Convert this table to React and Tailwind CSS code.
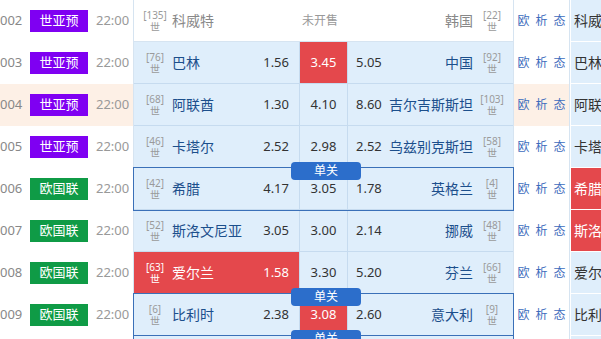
import React from "react";

const rows = [
  { num: "002", league: "wc", home: "科威特", hr: "135", ho: "", draw: "未开售", away: "韩国", ar: "22", ao: "", plain: true, right: "科威特" },
  { num: "003", league: "wc", home: "巴林", hr: "76", ho: "1.56", draw: "3.45", away: "中国", ar: "92", ao: "5.05", red: "draw", right: "巴林" },
  { num: "004", league: "wc", home: "阿联酋", hr: "68", ho: "1.30", draw: "4.10", away: "吉尔吉斯斯坦", ar: "103", ao: "8.60", peach: true, right: "阿联酋" },
  { num: "005", league: "wc", home: "卡塔尔", hr: "46", ho: "2.52", draw: "2.98", away: "乌兹别克斯坦", ar: "58", ao: "2.52", right: "卡塔尔" },
  { num: "006", league: "eu", home: "希腊", hr: "42", ho: "4.17", draw: "3.05", away: "英格兰", ar: "4", ao: "1.78", boxed: true, right: "希腊", rightRed: true },
  { num: "007", league: "eu", home: "斯洛文尼亚", hr: "52", ho: "3.05", draw: "3.00", away: "挪威", ar: "48", ao: "2.14", right: "斯洛文尼亚", rightRed: true },
  { num: "008", league: "eu", home: "爱尔兰", hr: "63", ho: "1.58", draw: "3.30", away: "芬兰", ar: "66", ao: "5.20", red: "home", right: "爱尔兰" },
  { num: "009", league: "eu", home: "比利时", hr: "6", ho: "2.38", draw: "3.08", away: "意大利", ar: "9", ao: "2.60", red: "draw", boxed: true, right: "比利时" },
  { num: "010", league: "eu", home: "葡萄牙", hr: "5", ho: "1.45", draw: "4.20", away: "波兰", ar: "26", ao: "5.60", boxed: true, right: "葡萄牙" },
];

function Rank({ n, white }) {
  return (
    <div
      className={`w-[22px] flex flex-col items-center text-[10px] leading-[12px] ${
        white ? "text-white" : "text-[#9a9a9a]"
      }`}
    >
      <span className="leading-[12px]">[{n}]</span>
      <span className="leading-[12px]">世</span>
    </div>
  );
}

function Row({ r }) {
  const homeRed = r.red === "home";
  const drawRed = r.red === "draw";
  const cellBg = r.plain ? "bg-white" : "bg-[#dfeefb]";
  const line = r.plain ? "border-white" : "border-[#c6dbef]";
  return (
    <div className="flex h-[42px]">
      <div
        className={`w-[134px] shrink-0 flex items-center border-r border-[#d6e4f1] ${
          r.peach ? "bg-[#fdf0e6]" : "bg-white"
        }`}
      >
        <span className="w-[30px] text-[13px] text-[#888]">{r.num}</span>
        <span
          className={`w-[58px] h-[22px] flex items-center justify-center text-[13px] text-white ${
            r.league === "wc" ? "bg-[#7f00f2]" : "bg-[#0f9b46]"
          }`}
        >
          {r.league === "wc" ? "世亚预" : "欧国联"}
        </span>
        <span className="ml-[8px] text-[13px] text-[#999]">22:00</span>
      </div>

      <div
        className={`w-[379px] shrink-0 flex ${
          r.boxed ? "relative z-[5] outline outline-1 outline-[#3a70b8]" : ""
        } ${r.plain ? "border-b border-[#d6e4f1]" : ""}`}
      >
        <div
          className={`w-[166px] shrink-0 flex items-center pl-[10px] pr-[10px] border-r ${
            r.plain ? "" : "border-b"
          } ${line} ${homeRed ? "bg-[#e4484c]" : cellBg}`}
        >
          <Rank n={r.hr} white={homeRed} />
          <span
            className={`ml-[6px] text-[14px] ${
              homeRed ? "text-white" : r.plain ? "text-[#888]" : "text-[#1c4f8c]"
            }`}
          >
            {r.home}
          </span>
          <span
            className={`ml-auto text-[13px] ${homeRed ? "text-white" : "text-[#333]"}`}
          >
            {r.ho}
          </span>
        </div>
        <div
          className={`relative w-[48px] shrink-0 flex items-center border-r ${
            r.plain ? "justify-start pl-[2px]" : "justify-center border-b"
          } ${line} ${drawRed ? "bg-[#e4484c]" : cellBg}`}
        >
          {r.boxed && (
            <div className="absolute -top-[6px] -left-[9px] z-10 w-[70px] h-[18px] rounded-[4px] bg-[#2c6ecb] text-white text-[12px] leading-[18px] text-center">
              单关
            </div>
          )}
          <span
            className={
              r.plain
                ? "text-[12px] text-[#999]"
                : `text-[13px] ${drawRed ? "text-white" : "text-[#333]"}`
            }
          >
            {r.draw}
          </span>
        </div>
        <div
          className={`flex-1 flex items-center pl-[8px] pr-[10px] ${
            r.plain ? "" : "border-b"
          } ${line} ${cellBg}`}
        >
          <span className="text-[13px] text-[#333]">{r.ao}</span>
          <span
            className={`ml-auto mr-[8px] text-[14px] ${
              r.plain ? "text-[#888]" : "text-[#1c4f8c]"
            }`}
          >
            {r.away}
          </span>
          <Rank n={r.ar} />
        </div>
      </div>

      <div
        className={`w-[57px] shrink-0 flex items-center justify-center gap-[6px] border-l border-r border-[#d6e4f1] text-[12px] text-[#3d6cbd] ${
          r.peach ? "bg-[#fdf0e6]" : "bg-white"
        }`}
      >
        <span>欧</span>
        <span>析</span>
        <span>态</span>
      </div>

      <div
        className={`flex-1 ml-[1px] mb-[1px] overflow-hidden whitespace-nowrap flex items-center pl-[3px] text-[14px] ${
          r.rightRed ? "bg-[#e4484c] text-white" : "bg-[#dfeefb] text-[#333]"
        }`}
      >
        {r.right}
      </div>
    </div>
  );
}

export default function App() {
  return (
    <div className="w-[601px] h-[339px] overflow-hidden bg-white font-['Noto_Sans','Noto_Sans_CJK_SC',sans-serif]">
      {rows.map((r) => (
        <Row key={r.num} r={r} />
      ))}
    </div>
  );
}
